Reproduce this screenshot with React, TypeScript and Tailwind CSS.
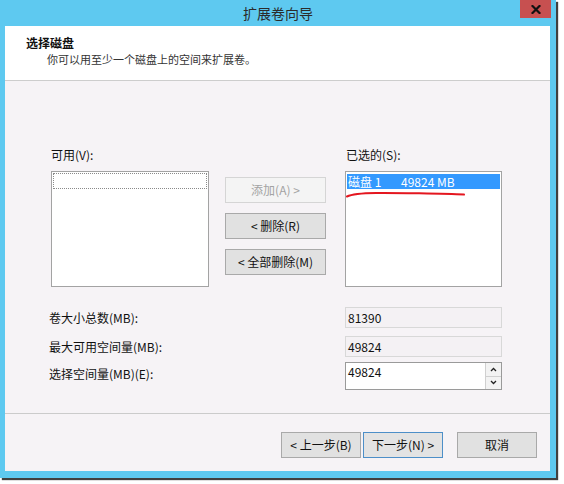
import React from 'react';

const Btn: React.FC<{ children: React.ReactNode; variant?: 'normal' | 'disabled' | 'default'; className?: string }> = ({
  children,
  variant = 'normal',
  className = '',
}) => {
  const look =
    variant === 'disabled'
      ? 'bg-[#f4f4f4] border-[#d5d5d5] text-[#a3a3a3]'
      : variant === 'default'
        ? 'bg-[#e3e3e3] border-[#4d8fc8] text-[#111]'
        : 'bg-[#e1e1e1] border-[#a9a9a9] text-[#111]';
  return (
    <div className={`h-[26px] flex items-center justify-center border text-[12px] ${look} ${className}`}>
      {children}
    </div>
  );
};

const ReadonlyBox: React.FC<{ value: string }> = ({ value }) => (
  <div className="w-[157px] h-[21px] border border-[#d8d8d8] bg-[#f4f1f4] pl-[2px] flex items-center text-[12px] text-[#111]">
    {value}
  </div>
);

export default function App() {
  return (
    <div className="w-[564px] h-[484px] bg-white font-['Noto_Sans_CJK_SC',sans-serif] text-[#111] overflow-hidden">
      <div className="w-[556px] h-[478px] bg-[#5ec9f0] flex flex-col shadow-[2px_2px_1px_rgba(0,0,0,0.75)]">
        {/* title bar */}
        <div className="h-[26px] grid grid-cols-[1fr_auto_1fr]">
          <div />
          <div className="text-[14px] leading-[26px] text-[#2b2b2b]">扩展卷向导</div>
          <div className="flex justify-end pr-[5px]">
            <div className="w-[31px] h-[18px] bg-[#c75050] flex items-center justify-center">
              <svg width="10" height="9" viewBox="0 0 10 9">
                <path d="M1.5 1 L8.5 8 M8.5 1 L1.5 8" stroke="#111" strokeWidth="2.2" strokeLinecap="square" />
              </svg>
            </div>
          </div>
        </div>

        {/* client area */}
        <div className="flex-1 ml-[5px] mr-[6px] mb-[7px] flex flex-col bg-[#f6f3f6]">
          <div className="h-[55px] bg-white border-b border-[#cdcdcd] pl-[21px] pt-[9px]">
            <div className="text-[12px] leading-[16px] font-bold text-[#111]">选择磁盘</div>
            <div className="text-[11px] leading-[16px] pl-[21px] text-[#333]">你可以用至少一个磁盘上的空间来扩展卷。</div>
          </div>

          <div className="flex-1 flex flex-col">
            <div className="flex pl-[46px] pt-[66px]">
              <div className="w-[158px]">
                <div className="h-[16px] leading-[16px] text-[12px] mb-[8px]">可用(V):</div>
                <div className="h-[116px] border border-[#a3a3a3] bg-white p-px">
                  <div className="h-[16px] border border-dotted border-[#8a8a8a]" />
                </div>
              </div>

              <div className="w-[101px] ml-[16px] pt-[30px] flex flex-col gap-[10px]">
                <Btn variant="disabled">添加(A) &gt;</Btn>
                <Btn>&lt; 删除(R)</Btn>
                <Btn>&lt; 全部删除(M)</Btn>
              </div>

              <div className="w-[157px] ml-[19px]">
                <div className="h-[16px] leading-[16px] text-[12px] mb-[8px] pl-px">已选的(S):</div>
                <div className="relative h-[116px] border border-[#a3a3a3] bg-white px-px pt-[2px]">
                  <div className="h-[15px] bg-[#3399ff] text-white text-[12px] leading-[15px] flex pl-px">
                    <span className="w-[53px]">磁盘 1</span>
                    <span>49824 MB</span>
                  </div>
                  <svg className="absolute left-0 top-[18px]" width="124" height="10" viewBox="0 0 124 10">
                    <path
                      d="M1 6.5 C 6 4, 14 3.2, 30 3 S 100 3.6, 118 4.6"
                      fill="none"
                      stroke="#e4161f"
                      strokeWidth="2"
                      strokeLinecap="round"
                    />
                  </svg>
                </div>
              </div>
            </div>

            <div className="flex flex-col pl-[44px] pt-[20px]">
              <div className="flex items-center h-[21px]">
                <div className="w-[296px] text-[12px]">卷大小总数(MB):</div>
                <ReadonlyBox value="81390" />
              </div>
              <div className="flex items-center h-[21px] mt-[8px]">
                <div className="w-[296px] text-[12px]">最大可用空间量(MB):</div>
                <ReadonlyBox value="49824" />
              </div>
              <div className="flex items-start h-[28px] mt-[5px]">
                <div className="w-[296px] text-[12px] pt-[3px]">选择空间量(MB)(E):</div>
                <div className="w-[157px] h-[28px] border border-[#9a9a9a] bg-white flex">
                  <div className="flex-1 pl-[2px] pt-[1px] text-[12px] leading-[16px]">49824</div>
                  <div className="w-[16px] flex flex-col border-l border-[#d0d0d0]">
                    <div className="flex-1 flex items-center justify-center border-b border-[#d0d0d0] bg-[#f3f3f3]">
                      <svg width="7" height="5" viewBox="0 0 7 5">
                        <path d="M1 4 L3.5 1.5 L6 4" fill="none" stroke="#222" strokeWidth="1.3" />
                      </svg>
                    </div>
                    <div className="flex-1 flex items-center justify-center bg-[#f3f3f3]">
                      <svg width="7" height="5" viewBox="0 0 7 5">
                        <path d="M1 1 L3.5 3.5 L6 1" fill="none" stroke="#222" strokeWidth="1.3" />
                      </svg>
                    </div>
                  </div>
                </div>
              </div>
            </div>
          </div>

          <div className="h-[58px] border-t border-[#cbcbcb] pt-[18px] pr-[13px] flex justify-end items-start">
            <Btn className="w-[80px]">&lt; 上一步(B)</Btn>
            <Btn variant="default" className="w-[80px] ml-[2px]">下一步(N) &gt;</Btn>
            <Btn className="w-[80px] ml-[14px]">取消</Btn>
          </div>
        </div>
      </div>
    </div>
  );
}
